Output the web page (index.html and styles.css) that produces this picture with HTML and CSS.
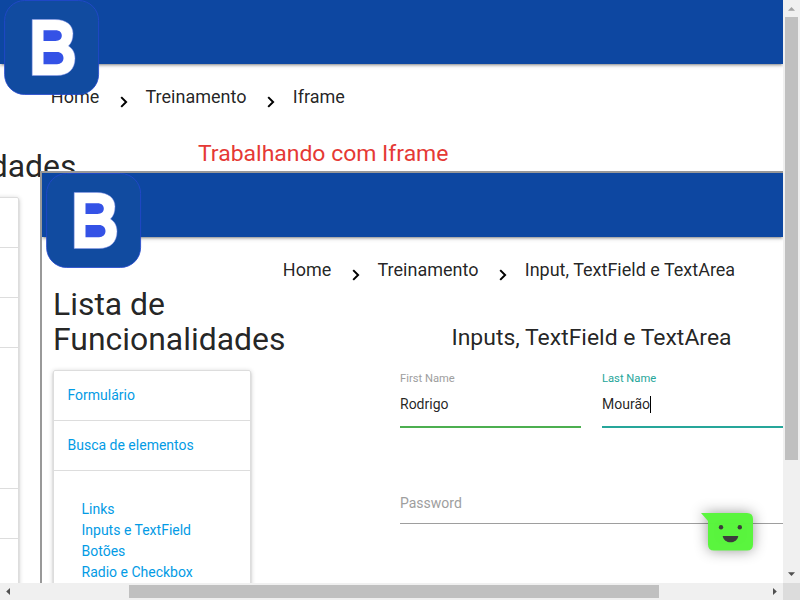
FILE: index.html
```html
<!DOCTYPE html>
<html lang="pt-BR">
<head>
<meta charset="utf-8">
<title>Trabalhando com Iframe</title>
<link rel="stylesheet" href="styles.css">
</head>
<body>
<svg class="defs" aria-hidden="true">
  <symbol id="logo" viewBox="0 0 96 96">
    <rect x="0.600" y="0.500" width="94" height="94" rx="20" fill="#114ba0" stroke="#2548cf" stroke-width="0.8"/>
    <path fill="#fff" stroke="#8e9bf0" stroke-width="0.5" d="M28.200 19.500H51C62 19.500 69 25 69 33.500C69 39 67.500 43 64.500 46C69 49 71 53 71 58.500C71 69 64.500 75.500 53 75.500H28.200Z"/>
    <path fill="#3452e6" d="M39.500 30.200H51.500C55.500 30.200 57.800 32.300 57.800 35.600S55.500 41 51.500 41H39.500ZM39.500 52H53C57 52 59.500 54.500 59.500 58.100S57 64.200 53 64.200H39.500Z"/>
  </symbol>
  <symbol id="chevron" viewBox="0 0 8 12">
    <path d="M1.200 1.100L6.100 6L1.200 10.900" fill="none" stroke="#000" stroke-width="2"/>
  </symbol>
</svg>
<div class="window">
  <main class="page">
    <header class="navbar"></header>
    <svg class="logo"><use href="#logo"/></svg>
    <nav class="crumbs crumbs-outer">
      <a>Home</a><svg class="sep"><use href="#chevron"/></svg><a>Treinamento</a><svg class="sep"><use href="#chevron"/></svg><a>Iframe</a>
    </nav>
    <div class="columns">
      <aside class="side-outer">
        <h4>Funcionalidades</h4>
        <ul class="collection">
          <li class="item"></li><li class="item"></li><li class="item"></li><li class="item tall"></li><li class="item"></li><li class="item"></li>
        </ul>
      </aside>
      <h5 class="title-outer">Trabalhando com Iframe</h5>
    </div>
    <section class="frame">
      <header class="navbar"></header>
      <svg class="logo"><use href="#logo"/></svg>
      <nav class="crumbs crumbs-inner">
        <a>Home</a><svg class="sep"><use href="#chevron"/></svg><a>Treinamento</a><svg class="sep"><use href="#chevron"/></svg><a>Input, TextField e TextArea</a>
      </nav>
      <div class="columns">
        <aside class="side-inner">
          <h4>Lista de Funcionalidades</h4>
          <ul class="collection">
            <li class="item"><a>Formulário</a></li>
            <li class="item"><a>Busca de elementos</a></li>
            <li class="sublist"><a>Links</a><a>Inputs e TextField</a><a>Botões</a><a>Radio e Checkbox</a></li>
          </ul>
        </aside>
        <div class="form">
          <h5>Inputs, TextField e TextArea</h5>
          <div class="fields">
            <div class="field valid"><label>First Name</label><div class="value">Rodrigo</div></div>
            <div class="field focused"><label>Last Name</label><div class="value">Mourão<i class="caret"></i></div></div>
            <div class="field password"><div class="value">Password</div></div>
          </div>
        </div>
      </div>
    </section>
    <svg class="chat" viewBox="0 0 54 40">
      <path fill="#58f63b" fill-opacity=".98" d="M1 1H47Q53 1 53 7V32.500Q53 38.500 47 38.500H14Q8 38.500 8 32.500V9Z"/>
      <circle cx="21" cy="15.300" r="2.200" fill="#3c3c3c"/><circle cx="39.800" cy="15.300" r="2.200" fill="#3c3c3c"/>
      <path fill="#3c3c3c" d="M22.700 24H38.300C37.500 28 34.500 30.300 30.500 30.300S23.500 28 22.700 24Z"/>
    </svg>
  </main>
  <div class="scroll vertical">
    <svg class="arrow faded" viewBox="0 0 17 17"><path d="M8.500 7L12 10.800H5Z"/></svg>
    <div class="thumb"></div>
    <svg class="arrow" viewBox="0 0 17 17"><path d="M5 6.200H12L8.500 10Z"/></svg>
  </div>
  <div class="scroll horizontal">
    <svg class="arrow" viewBox="0 0 17 17"><path d="M6.200 8.500L10 5V12Z"/></svg>
    <div class="thumb"></div>
    <svg class="arrow" viewBox="0 0 17 17"><path d="M7 5L10.800 8.500L7 12Z"/></svg>
  </div>
  <div class="corner"></div>
</div>
</body>
</html>
```
FILE: styles.css
```css
* { box-sizing: border-box; }
body { margin: 0; font: 14px/21px Roboto, sans-serif; color: rgba(0,0,0,.87); overflow: hidden; }
h4, h5, ul { margin: 0; padding: 0; font-weight: 400; list-style: none; }
h4 { font-size: 31.92px; line-height: 35px; }
h5 { font-size: 22.96px; line-height: 25px; }
.defs { position: absolute; width: 0; height: 0; }
.window { display: grid; grid-template: 583px 17px / 783px 17px; width: 800px; height: 600px; overflow: hidden; }
.page { position: relative; overflow: hidden; background: #fff; }
.navbar { height: 64px; background: #0d47a1; box-shadow: 0 2px 2px 0 rgba(0,0,0,.14), 0 3px 1px -2px rgba(0,0,0,.12), 0 1px 5px 0 rgba(0,0,0,.2); }
.logo { position: absolute; z-index: 1; left: 4px; top: 0; width: 96px; height: 96px; }
.crumbs { display: flex; height: 64px; align-items: center; padding-top: 2px; font-size: 18px; line-height: 62px; white-space: nowrap; }
.crumbs-outer { padding-left: 50.8px; }
.crumbs-inner { padding-left: 240.8px; }
.sep { flex: none; width: 8px; height: 12px; margin: 10px 18px 0 20.3px; }
.columns { display: flex; align-items: flex-start; }
.side-outer { width: 175px; margin-left: -156px; padding-top: 21px; flex: none; }
.side-outer .collection { margin-top: 13px; }
.title-outer { margin: 13px 0 0 179px; color: #e53935; white-space: nowrap; }
.collection { border: 1px solid #ddd; border-radius: 2px; box-shadow: 0 2px 2px 0 rgba(0,0,0,.14), 0 3px 1px -2px rgba(0,0,0,.12), 0 1px 5px 0 rgba(0,0,0,.2); }
.item { height: 50px; padding: 14px 13.5px; border-bottom: 1px solid #ddd; color: #039be5; }
.item.tall { height: 141px; }
.frame { position: absolute; z-index: 2; left: 40px; top: 171px; width: 743px; height: 412px; overflow: hidden; border: solid #999; border-width: 2px 0 0 2px; background: #fff; }
.side-inner { width: 198px; margin: -14px 0 0 11px; flex: none; }
.side-inner h4 { width: 240px; }
.side-inner .collection { margin-top: 13px; height: 400px; }
.sublist { padding: 28px 27.5px; color: #039be5; }
.sublist a { display: block; white-space: nowrap; }
.form { width: 383px; margin-left: 149px; padding-top: 24px; flex: none; }
.form h5 { text-align: center; }
.fields { display: grid; grid-template-columns: 181px 181px; column-gap: 21px; padding-top: 22px; }
.field { height: 58px; }
.field label { display: block; color: #9e9e9e; font-size: 11.2px; line-height: 14px; }
.value { height: 42px; line-height: 37px; border-bottom: 1px solid #9e9e9e; }
.valid .value { border-bottom: 2px solid #4caf50; }
.focused label { color: #26a69a; }
.focused .value { border-bottom: 2px solid #26a69a; }
.caret { display: inline-block; width: 1px; height: 17px; background: #000; vertical-align: -4px; }
.password { grid-column: 1 / -1; margin-top: 52px; color: #9e9e9e; }
.password .value { line-height: 42px; }
.chat { position: absolute; z-index: 3; left: 700px; top: 512px; width: 54px; height: 40px; overflow: visible; filter: drop-shadow(0 0 7px rgba(0,0,0,.42)); }
.scroll { display: flex; background: #f0f0f0; }
.vertical { flex-direction: column; }
.thumb { background: #c0c0c0; }
.vertical .thumb { width: 13px; height: 443px; margin: 0 2px auto; }
.horizontal .thumb { width: 530px; height: 13px; margin: 2px auto 2px 112px; }
.arrow { width: 17px; height: 17px; flex: none; fill: #505050; }
.faded { fill: #a3a3a3; }
.corner { background: #dcdcdc; }
```
